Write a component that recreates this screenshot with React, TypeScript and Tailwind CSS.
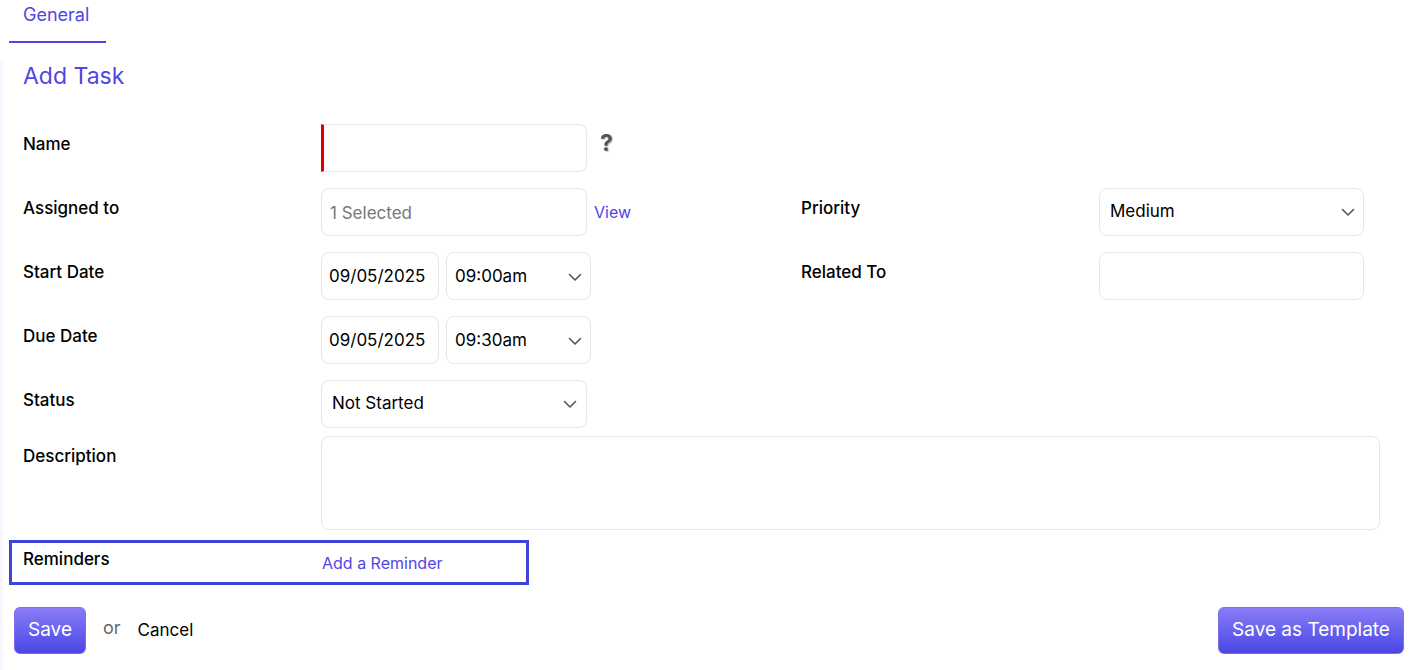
import React from "react";

const Chevron = ({ className = "" }: { className?: string }) => (
  <svg width="14" height="9" viewBox="0 0 14 9" className={className} fill="none">
    <path d="M1.5 1.5 L7 7 L12.5 1.5" stroke="#555" strokeWidth="1.6" strokeLinecap="round" strokeLinejoin="round" />
  </svg>
);

const box = "h-12 rounded-lg border border-[#e6e6e6] bg-white";

export default function App() {
  return (
    <div className="min-h-[670px] bg-white text-black font-['Inter','Liberation_Sans',sans-serif]">
      <div className="pl-[9px]">
        <div className="w-[97px] h-[43px] border-b-2 border-[#4f46e5] pl-[14px] pt-[1px] text-[18px] leading-[28px] text-[#4f46e5]">
          General
        </div>
      </div>
      <div className="border-l-[3px] border-[#f7f6fe] pl-[6px] pr-[17px] pb-4">
        <div className="pl-[14px] pr-[24px]">
          <h1 className="mt-[19px] text-[23px] leading-[28px] text-[#4f46e5]">Add Task</h1>
          <div className="mt-[34px] grid grid-cols-[298px_480px_298px_1fr] text-[17px]">
            {/* Name */}
            <div className="pt-[8px] font-medium leading-6">Name</div>
            <div className="col-span-3 mb-4 flex items-start">
              <div className={`${box} w-[266px] border-l-[3px] border-l-[#e00000] rounded-l-none`} />
              <span className="ml-[13px] mt-[5px] text-[23px] leading-[28px] font-bold text-[#555] [text-shadow:1px_1px_1px_#b8c4d0]">?</span>
            </div>
            {/* Assigned to / Priority */}
            <div className="pt-[8px] font-medium leading-6">Assigned to</div>
            <div className="mb-4 flex items-center">
              <div className={`${box} w-[266px] flex items-center pl-2 pt-[3px] text-[#777]`}>1 Selected</div>
              <span className="ml-[7px] text-[16px] text-[#4f46e5]">View</span>
            </div>
            <div className="pt-[8px] font-medium leading-6">Priority</div>
            <div className="mb-4">
              <div className={`${box} w-[265px] flex items-center justify-between pl-[10px] pr-[8px]`}>
                <span className="-mt-[1px]">Medium</span>
                <Chevron />
              </div>
            </div>
            {/* Start date / Related To */}
            <div className="pt-[8px] font-medium leading-6">Start Date</div>
            <div className="mb-4 flex gap-[7px]">
              <div className={`${box} w-[118px] flex items-center pl-[7px] pt-[2px]`}>09/05/2025</div>
              <div className={`${box} w-[145px] flex items-center justify-between pl-[8px] pr-[8px] pt-[2px]`}>
                <span>09:00am</span>
                <Chevron />
              </div>
            </div>
            <div className="pt-[8px] font-medium leading-6">Related To</div>
            <div className="mb-4">
              <div className={`${box} w-[265px]`} />
            </div>
            {/* Due date */}
            <div className="pt-[8px] font-medium leading-6">Due Date</div>
            <div className="col-span-3 mb-4 flex gap-[7px]">
              <div className={`${box} w-[118px] flex items-center pl-[7px] pt-[2px]`}>09/05/2025</div>
              <div className={`${box} w-[145px] flex items-center justify-between pl-[8px] pr-[8px] pt-[2px]`}>
                <span>09:30am</span>
                <Chevron />
              </div>
            </div>
            {/* Status */}
            <div className="pt-[8px] font-medium leading-6">Status</div>
            <div className="col-span-3 mb-2">
              <div className={`${box} w-[266px] flex items-center justify-between pl-[10px] pr-[9px]`}>
                <span>Not Started</span>
                <Chevron />
              </div>
            </div>
            {/* Description */}
            <div className="pt-[8px] font-medium leading-6">Description</div>
            <div className="col-span-3">
              <div className="h-[94px] rounded-lg border border-[#e6e6e6] bg-white" />
            </div>
          </div>
        </div>
        <div className="mt-[10px] w-[520px] h-[45px] border-[3px] border-[#3e44d6] pl-[11px] grid grid-cols-[299px_1fr]">
          <div className="pt-[4px] text-[17px] font-medium leading-6">Reminders</div>
          <div className="pt-[8px] text-[16px] leading-6 text-[#4f46e5]">Add a Reminder</div>
        </div>
        <div className="mt-[22px] flex items-center justify-between pl-[5px]">
          <div className="flex items-center">
            <button className="h-[47px] w-[72px] rounded-md border border-[#7c6ff2] bg-linear-to-b from-[#8b7cf7] to-[#4a44e3] text-[19px] text-white">
              Save
            </button>
            <span className="ml-[17px] -mt-[7px] text-[18px] text-[#666]">or</span>
            <span className="ml-[17px] text-[17px]">Cancel</span>
          </div>
          <button className="h-[47px] w-[186px] rounded-md border border-[#7c6ff2] bg-linear-to-b from-[#8b7cf7] to-[#4a44e3] text-[19px] text-white">
            Save as Template
          </button>
        </div>
      </div>
    </div>
  );
}
